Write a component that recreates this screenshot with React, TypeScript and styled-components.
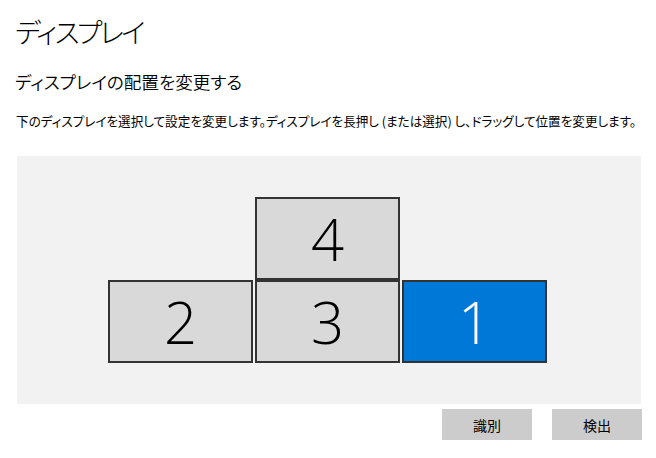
import React from "react";
import styled, { createGlobalStyle } from "styled-components";

const GlobalStyle = createGlobalStyle`
  html, body {
    margin: 0;
    padding: 0;
    background: #fff;
  }
  body {
    font-family: "Noto Sans CJK JP", "Noto Sans", sans-serif;
    font-feature-settings: "palt";
    color: #000;
  }
`;

type Display = {
  id: number;
  col: number;
  row: number;
  active?: boolean;
};

const displays: Display[] = [
  { id: 4, col: 2, row: 1 },
  { id: 2, col: 1, row: 2 },
  { id: 3, col: 2, row: 2 },
  { id: 1, col: 3, row: 2, active: true },
];

const App = () => {
  return (
    <>
      <GlobalStyle />
      <Page>
        <Title>ディスプレイ</Title>
        <SubTitle>ディスプレイの配置を変更する</SubTitle>
        <Hint>
          下のディスプレイを選択して設定を変更します。ディスプレイを長押し (または選択) し、ドラッグして位置を変更します。
        </Hint>
        <Canvas>
          <Arrangement>
            {displays.map((d) => (
              <Monitor key={d.id} $col={d.col} $row={d.row} $active={!!d.active}>
                {d.id}
              </Monitor>
            ))}
          </Arrangement>
        </Canvas>
        <Actions>
          <Button>識別</Button>
          <Button>検出</Button>
        </Actions>
      </Page>
    </>
  );
};

const Page = styled.div`
  width: 656px;
  height: 458px;
  box-sizing: border-box;
  padding: 12px 15px 0 17px;
  display: flex;
  flex-direction: column;
`;

const Title = styled.h1`
  margin: 0 0 0 -2px;
  font-size: 27.5px;
  font-weight: 300;
  line-height: 38px;
  letter-spacing: -2.6px;
`;

const SubTitle = styled.h2`
  margin: 19px 0 0 -2px;
  font-size: 17.6px;
  font-weight: 350;
  line-height: 26px;
`;

const Hint = styled.p`
  margin: 17px 0 0 -1px;
  font-size: 12.6px;
  line-height: 18px;
  white-space: nowrap;
`;

const Canvas = styled.div`
  margin-top: 26px;
  width: 624px;
  height: 248px;
  background: #f2f2f2;
  display: flex;
  align-items: center;
  justify-content: center;
`;

const Arrangement = styled.div`
  display: grid;
  grid-template-columns: repeat(3, 145px);
  grid-template-rows: repeat(2, 83px);
  column-gap: 2px;
  margin-left: -3px;
`;

type MonitorProps = {
  $col: number;
  $row: number;
  $active: boolean;
};

const Monitor = styled.div<MonitorProps>`
  grid-column: ${({ $col }) => $col};
  grid-row: ${({ $row }) => $row};
  box-sizing: border-box;
  border: 2px solid #333;
  background: ${({ $active }) => ($active ? "#0078d7" : "#d9d9d9")};
  color: ${({ $active }) => ($active ? "#fff" : "#000")};
  display: flex;
  align-items: center;
  justify-content: center;
  font-family: "Open Sans", "Noto Sans", sans-serif;
  font-weight: 300;
  font-size: 58px;
  line-height: 1;
`;

const Actions = styled.div`
  margin-top: 5px;
  width: 625px;
  display: flex;
  justify-content: flex-end;
  gap: 20px;
`;

const Button = styled.button`
  width: 90px;
  height: 31px;
  border: none;
  padding: 0;
  background: #cccccc;
  font-family: "Noto Sans CJK JP", sans-serif;
  font-size: 14px;
  color: #000;
`;

export default App;
